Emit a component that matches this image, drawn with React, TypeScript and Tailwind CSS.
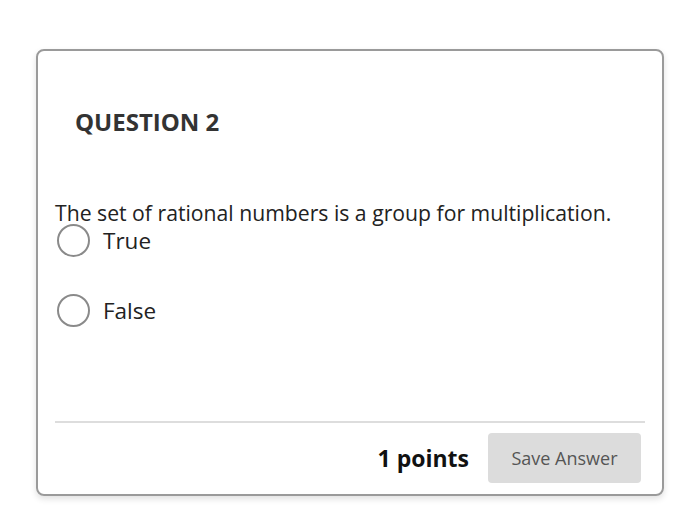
export default function App() {
  return (
    <div className="w-[700px] h-[532px] bg-white pt-[49px] pl-[36px] font-['Open_Sans',sans-serif]">
      <div className="w-[628px] h-[447px] border-2 border-[#9a9a9a] rounded-lg shadow-[0_3px_6px_rgba(0,0,0,0.12)] flex flex-col">
        <h2 className="mt-[55px] ml-[37px] text-[24px] leading-8 font-bold text-[#333]">QUESTION 2</h2>
        <p className="mt-[61px] ml-[17px] text-[21.2px] leading-[28px] text-[#222]">
          The set of rational numbers is a group for multiplication.
        </p>
        <div className="ml-[19px] -mt-[3px] flex flex-col gap-[37px]">
          {['True', 'False'].map((label) => (
            <label key={label} className="flex items-center gap-[13px]">
              <span className="w-[33px] h-[33px] rounded-full border-2 border-[#8a8a8a]" />
              <span className="text-[22.5px] leading-8 text-[#222]">{label}</span>
            </label>
          ))}
        </div>
        <div className="mt-auto mx-[17px] border-t-2 border-[#ddd] flex items-center justify-end gap-[19px] pt-[10px] pb-[11px] pr-[4px]">
          <span className="text-[23px] leading-8 font-bold text-[#111]">1 points</span>
          <button
            type="button"
            className="w-[153px] h-[50px] rounded-sm bg-[#dcdcdc] text-[18px] leading-6 text-[#555]"
          >
            Save Answer
          </button>
        </div>
      </div>
    </div>
  );
}
